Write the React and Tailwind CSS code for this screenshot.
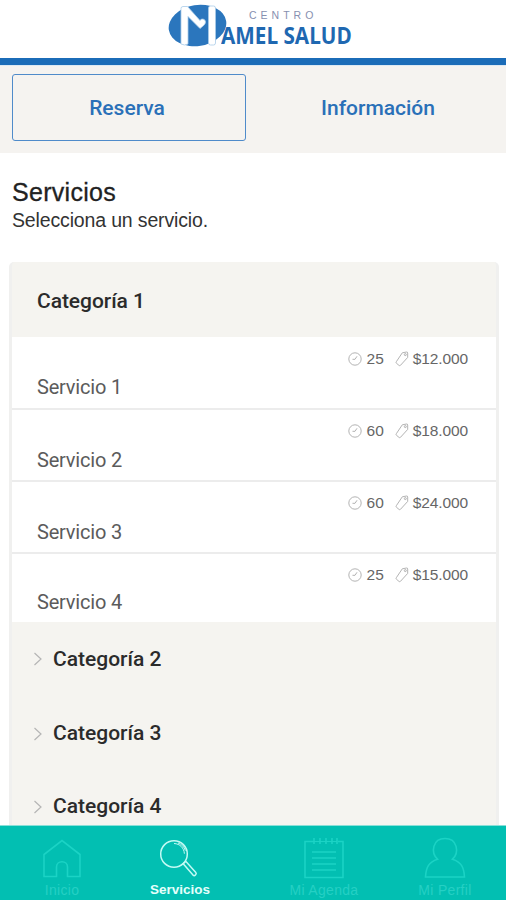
// src/App.jsx
import React, { useState } from "react";

const services = [
  { id: 1, name: "Servicio 1", minutes: 25, price: "$12.000", row: "h-[73px] pt-[12px] border-b-2", label: "pt-[11px]" },
  { id: 2, name: "Servicio 2", minutes: 60, price: "$18.000", row: "h-[72px] pt-[11px] border-b-2", label: "pt-[12px]" },
  { id: 3, name: "Servicio 3", minutes: 60, price: "$24.000", row: "h-[72px] pt-[11px] border-b-2", label: "pt-[12px]" },
  { id: 4, name: "Servicio 4", minutes: 25, price: "$15.000", row: "h-[68px] pt-[11px]", label: "pt-[10px]" },
];

const categories = [
  { id: 2, name: "Categoría 2", row: "h-[74px]" },
  { id: 3, name: "Categoría 3", row: "h-[75px]" },
  { id: 4, name: "Categoría 4", row: "h-[71px]" },
];

function Logo() {
  return (
    <div className="flex" role="img" aria-label="Centro Mamel Salud">
      <svg width="62" height="50" viewBox="167 1 62 50">
        <ellipse cx="197.5" cy="26.5" rx="29" ry="20.5" fill="#2b76bd" transform="rotate(-9 197.5 26.5)" />
        <path
          d="M181 45V9.5q0-2 2-2h4.500l12.500 14c1.500-2.500 5.500-1.500 5.500 1.500 0 2.500-3 4.500-5.500 6.500L188 17.500V45q-3.500 2-7 0z"
          fill="#fff"
          stroke="#a9cbe8"
          strokeWidth=".8"
          strokeLinejoin="round"
        />
        <rect x="208.5" y="7" width="7" height="39" rx="2" fill="#fff" stroke="#a9cbe8" strokeWidth=".8" />
      </svg>
      <div className="-ml-[8px] flex flex-col">
        <span className="ml-[28px] mt-[9px] font-['Liberation_Sans',sans-serif] text-[10.5px] leading-[12px] tracking-[4px] text-[#8790b0]">
          CENTRO
        </span>
        <span className="mt-[1px] origin-left scale-x-[.92] whitespace-nowrap font-['Open_Sans',sans-serif] text-[22.5px] leading-[28px] font-bold text-[#1f68b1]">
          AMEL SALUD
        </span>
      </div>
    </div>
  );
}

function ClockIcon() {
  return (
    <svg width="14" height="14" viewBox="0 0 14 14" fill="none" stroke="#aaa" strokeWidth=".9">
      <circle cx="7" cy="7" r="6.2" />
      <path d="M9 4.3 7 7.3H4.5" />
    </svg>
  );
}

function TagIcon() {
  return (
    <svg width="15" height="16" viewBox="0 0 15 16" fill="none" stroke="#aaa" strokeWidth=".9" strokeLinejoin="round">
      <path d="M8.3 1.8 12.5 1q1.2-.1 1.2 1v4.4L6.500 14.300q-.8.8-1.600 0L2.400 12.200q-.8-.7 0-1.600z" />
      <circle cx="11.3" cy="3.6" r="1" />
    </svg>
  );
}

function HomeIcon() {
  return (
    <svg width="40" height="40" viewBox="0 0 40 40" fill="none" stroke="#1bd3c5" strokeWidth="1.6">
      <path d="M2 37.5V15.5L20 1.5l18 14v22H25.5V28c0-7-11-7-11 0v9.5z" />
    </svg>
  );
}

function SearchIcon() {
  return (
    <svg width="40" height="40" viewBox="0 0 40 40" fill="none" stroke="#c4faf4" strokeWidth="1.5">
      <circle cx="16" cy="15" r="13.3" />
      <path d="M16 4.5c6 .3 10 4.5 10.4 10.2M20 4c3.8 1.3 6.4 4 7.3 7.6" strokeWidth="1" />
      <path d="m25.2 24.8 2.6-2.5 10 11.2q1 1.3-.3 2.5t-2.5.1z" />
    </svg>
  );
}

function AgendaIcon() {
  return (
    <svg width="42" height="42" viewBox="0 0 42 42" fill="none" stroke="#1bd3c5" strokeWidth="1.6">
      <path d="M10 4.5H2v36h38v-36h-5" />
      <path d="M9 15h24M9 21h24M9 27h24M9 33h24" />
      <path d="M11 1v6M17 1v6M23 1v6M29 1v6M34 1v6" />
      <path d="M10 4.5h24" strokeWidth="1" />
    </svg>
  );
}

function ProfileIcon() {
  return (
    <svg width="42" height="42" viewBox="0 0 42 42" fill="none" stroke="#1bd3c5" strokeWidth="1.6">
      <path d="M13.5 22.2C5 25 2 30 1.5 40h39c-.5-10-3.5-15-12-17.8 7-6.7 5-20.7-7.5-20.7S6.5 15.5 13.5 22.2z" />
    </svg>
  );
}

export default function App() {
  const [tab, setTab] = useState("reserva");

  return (
    <div className="flex h-[900px] w-[506px] flex-col overflow-hidden bg-white font-['Roboto',sans-serif]">
      {/* Header */}
      <header className="h-[65px] shrink-0 border-b-[7px] border-[#1b6cb8] pl-[167px]">
        <Logo />
      </header>

      {/* Tabs */}
      <div className="flex h-[88px] shrink-0 gap-3 border-t border-[#dce9f3] bg-[#f5f3f0] pl-3 pt-[8px]">
        <button
          onClick={() => setTab("reserva")}
          className={`h-[67px] w-[234px] shrink-0 rounded-[3px] border pr-1 pt-[2px] text-[21px] font-medium text-[#2a70b8] ${
            tab === "reserva" ? "border-[#4f8bca]" : "border-transparent"
          }`}
        >
          Reserva
        </button>
        <button
          onClick={() => setTab("informacion")}
          className={`h-[67px] w-[240px] shrink-0 rounded-[3px] border pt-[2px] text-[21px] font-medium text-[#2a70b8] ${
            tab === "informacion" ? "border-[#4f8bca]" : "border-transparent"
          }`}
        >
          Información
        </button>
      </div>

      {/* Title */}
      <div className="h-[109px] shrink-0 px-3 pt-[24px] font-['Liberation_Sans',sans-serif]">
        <h1 className="text-[25px] leading-[30px] tracking-[0.3px] text-[#222] [-webkit-text-stroke:0.3px_#222]">Servicios</h1>
        <p className="text-[19.5px] leading-[26px] tracking-[-0.15px] text-[#333]">Selecciona un servicio.</p>
      </div>

      {/* Services */}
      <div className="ml-[9px] flex h-[563px] w-[490px] shrink-0 flex-col overflow-hidden rounded-t-[5px] border-x-[3px] border-[#f0f0ef] bg-[#f5f4f0]">
        <h2 className="h-[75px] shrink-0 pl-[25px] pt-[26px] text-[21px] leading-[26px] font-medium tracking-[-0.05px] text-[#2b2b2b]">
          Categoría 1
        </h2>
        {services.map((service) => (
          <div key={service.id} className={`shrink-0 border-[#ececec] bg-white pl-[25px] pr-[28px] ${service.row}`}>
            <div className="flex h-[20px] items-center justify-end font-['Liberation_Sans',sans-serif] text-[15.5px] tracking-[-0.1px] text-[#666]">
              <ClockIcon />
              <span className="ml-[5px] mr-[10px]">{service.minutes}</span>
              <TagIcon />
              <span className="ml-[4px]">{service.price}</span>
            </div>
            <div className={`h-0 text-[20px] leading-[14px] tracking-[-0.2px] text-[#5b5b5b] ${service.label}`}>{service.name}</div>
          </div>
        ))}
        {categories.map((category) => (
          <div key={category.id} className={`flex shrink-0 items-center pl-[21px] ${category.row}`}>
            <svg width="10" height="14" viewBox="0 0 10 14" fill="none" stroke="#b5b5b5" strokeWidth="1.2">
              <path d="m1.5 1 6.5 6-6.5 6" />
            </svg>
            <span className="ml-[10px] pt-px text-[21px] font-medium text-[#2b2b2b]">{category.name}</span>
          </div>
        ))}
      </div>

      {/* Bottom navigation */}
      <nav className="flex h-[75px] shrink-0 border-t border-[#8adfd8] bg-[#02bfb2] font-['Liberation_Sans',sans-serif] text-[14px] leading-[14px] text-[#25d0c4]">
        <a href="#inicio" className="flex w-[124px] flex-col items-center pt-[13px]">
          <HomeIcon />
          <span className="mt-[4px] tracking-[0.3px]">Inicio</span>
        </a>
        <a href="#servicios" className="flex w-[112px] flex-col items-center pt-[13px] text-[13.5px] font-bold text-[#e4fffb]">
          <div className="mr-[5px]">
            <SearchIcon />
          </div>
          <span className="mt-[4px]">Servicios</span>
        </a>
        <a href="#agenda" className="flex w-[176px] flex-col items-center pt-[11px]">
          <AgendaIcon />
          <span className="mt-[4px] tracking-[0.3px]">Mi Agenda</span>
        </a>
        <a href="#perfil" className="flex w-[66px] flex-col items-center pt-[11px]">
          <ProfileIcon />
          <span className="mt-[4px] whitespace-nowrap tracking-[0.3px]">Mi Perfil</span>
        </a>
      </nav>
    </div>
  );
}
